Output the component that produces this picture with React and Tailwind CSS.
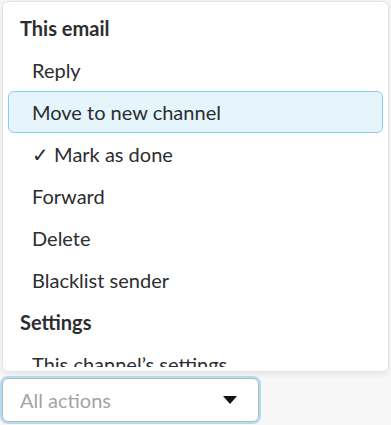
import { useState } from 'react';

const groups = [
  {
    title: 'This email',
    items: ['Reply', 'Move to new channel', '✓ Mark as done', 'Forward', 'Delete', 'Blacklist sender'],
  },
  {
    title: 'Settings',
    items: ['This channel’s settings'],
  },
];

export default function App() {
  const [active] = useState('Move to new channel');

  return (
    <div className="w-[391px] h-[425px] bg-[#f7f7f7] overflow-hidden font-['Lato','Noto_Sans',sans-serif] text-[#2c2d30]">
      <div className="ml-[2px] mr-[2px] mt-px h-[371px] pb-[4px] rounded-[6px] border border-[#e3e3e3] bg-white shadow-[0_2px_6px_rgba(0,0,0,0.08)]">
        <div className="h-full overflow-hidden pt-[5px] px-[5px]">
          {groups.map(g => (
            <div key={g.title}>
              <div className="h-[42px] flex items-center pl-[12px] text-[20px] font-bold">{g.title}</div>
              {g.items.map(item => (
                <div
                  key={item}
                  className={`h-[42px] flex items-center pl-[23px] text-[20px] rounded-[6px] border ${
                    item === active ? 'bg-[#e6f4fb] border-[#86d0ef]' : 'border-transparent'
                  }`}
                >
                  {item}
                </div>
              ))}
            </div>
          ))}
        </div>
      </div>

      <div className="ml-[2px] mt-[6px] w-[257px] h-[44px] flex items-center justify-between pl-[17px] pr-[21px] rounded-[6px] border border-[#b9b9b9] bg-white shadow-[0_0_0_2px_rgba(90,190,235,0.45)]">
        <span className="text-[20px] text-[#a3a3a3]">All actions</span>
        <svg width="14" height="8" viewBox="0 0 14 8">
          <path d="M0 0 H14 L7 8 Z" fill="#111" />
        </svg>
      </div>
    </div>
  );
}
